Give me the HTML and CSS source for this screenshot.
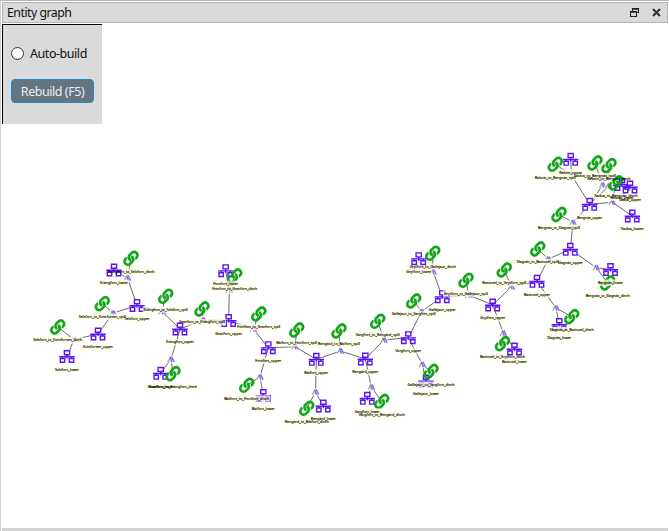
FILE: index.html
```html
<!DOCTYPE html>
<html lang="en">
<head>
<meta charset="utf-8">
<title>Entity graph</title>
<link rel="stylesheet" href="styles.css">
</head>
<body>
<section class="dock">
  <header class="dock-title">
    <span class="dock-name">Entity graph</span>
    <svg class="dock-icon" viewBox="0 0 9 9"><path d="M2.5 3V.5h6v4H7M2.5 1.3h6M.5 3.5h6v5h-6zM.5 4.3h6" fill="none" stroke="#222" stroke-width="1.1"/></svg>
    <svg class="dock-icon" viewBox="0 0 9 9"><path d="M1 1l7 7M8 1L1 8" fill="none" stroke="#333" stroke-width="2.1"/></svg>
  </header>
  <main class="canvas">
    <form class="options">
      <label class="auto"><input class="radio" type="radio">Auto-build</label>
      <button class="rebuild" type="button">Rebuild (F5)</button>
    </form>
    <svg class="graph" id="graph" viewBox="0 0 669 531">
      <defs>
        <g id="unit">
          <path d="M0-1.6V2M-7.7.2h15.4M-4.6.2v2M4.6.2v2" class="wire"/>
          <path d="M-2.6-5.8h5.2v4h-5.2zM-6.7 2h4.4v3.8h-4.4zM2.3 2h4.4v3.8H2.3z" class="box"/>
        </g>
        <g id="link"><path transform="scale(.0298) translate(-256 -256)" d="M326.612 185.391c59.747 59.809 58.927 155.698.36 214.59-.11.12-.24.25-.36.37l-67.2 67.2c-59.27 59.27-155.699 59.262-214.96 0-59.27-59.26-59.27-155.7 0-214.96l37.106-37.106c9.84-9.84 26.786-3.3 27.294 10.606.648 17.722 3.826 35.527 9.69 52.721 1.986 5.822.567 12.262-3.783 16.612l-13.087 13.087c-28.026 28.026-28.905 73.66-1.155 101.96 28.024 28.579 74.086 28.749 102.325.51l67.2-67.19c28.191-28.191 28.073-73.757 0-101.83-3.701-3.694-7.429-6.564-10.341-8.569a16.037 16.037 0 0 1-6.947-12.606c-.396-10.567 3.348-21.456 11.698-29.806l21.054-21.055c5.521-5.521 14.182-6.199 20.584-1.731a152.482 152.482 0 0 1 20.522 17.197zM467.547 44.449c-59.261-59.262-155.69-59.27-214.96 0l-67.2 67.2c-.12.12-.25.25-.36.37-58.566 58.892-59.387 154.781.36 214.59a152.454 152.454 0 0 0 20.521 17.196c6.402 4.468 15.064 3.789 20.584-1.731l21.054-21.055c8.35-8.35 12.094-19.239 11.698-29.806a16.037 16.037 0 0 0-6.947-12.606c-2.912-2.005-6.64-4.875-10.341-8.569-28.073-28.073-28.191-73.639 0-101.83l67.2-67.19c28.239-28.239 74.3-28.069 102.325.51 27.75 28.3 26.872 73.934-1.155 101.96l-13.087 13.087c-4.35 4.35-5.769 10.79-3.783 16.612 5.864 17.194 9.042 34.999 9.69 52.721.509 13.906 17.454 20.446 27.294 10.606l37.106-37.106c59.271-59.259 59.271-155.699.001-214.959z" class="chain"/></g>
        <g id="joint">
          <circle r="4.2" class="halo"/>
          <path d="M-3.2 2.8L-.9-1.6" class="joint-green"/>
          <path d="M-1-2.6L1 2.8M.6-2.6L3.2 2.8" class="joint-violet"/>
        </g>
      </defs>
    </svg>
  </main>
</section>
<script src="graph.js"></script>
</body>
</html>
```

FILE: styles.css
```css
* { box-sizing: border-box; }
body {
  margin: 0;
  height: 531px;
  background: #fff;
  font: 12.5px "Noto Sans", "Open Sans", sans-serif;
  letter-spacing: -0.45px;
  color: #111;
  overflow: hidden;
}
.dock {
  height: 531px;
  border-top: 1px solid #b8b8b8;
  border-left: 1px solid #d0d0d0;
  padding: 1px 1px 0 1px;
  display: flex;
  flex-direction: column;
}
.dock-title {
  height: 21px;
  flex: none;
  display: flex;
  align-items: center;
  padding: 0 6px 0 4px;
  gap: 13px;
  background: #dadada;
  border: 1px solid #b4b4b4;
}
.dock-name { flex: 1; font-size: 12.3px; letter-spacing: -0.5px; line-height: 18px; padding-top: 1px; }
.dock-icon { width: 9px; height: 9px; }
.canvas {
  flex: 1;
  display: grid;
  padding-top: 1px;
  border-bottom: 3px solid #d3d3d3;
}
.options {
  width: 100px;
  height: 100px;
  background: #dadada;
  border-top: 1px solid #000;
  border-left: 1px solid #000;
  padding: 18px 8px 0;
  display: flex;
  flex-direction: column;
  gap: 16px;
}
.auto { display: flex; align-items: center; gap: 6px; height: 20px; white-space: nowrap; }
.radio {
  appearance: none;
  width: 13px;
  height: 13px;
  margin: 0;
  border: 1px solid #333;
  border-radius: 50%;
  background: #fff;
}
.rebuild {
  height: 24px;
  width: 83px;
  padding: 0;
  border: 1px solid #1e8bd0;
  border-radius: 4px;
  background: #637582;
  color: #eee;
  font: inherit;
  letter-spacing: -0.45px;
  white-space: nowrap;
}
.graph { position: absolute; left: 0; top: 0; width: 669px; height: 531px; letter-spacing: 0; pointer-events: none; }
.edge { stroke: #444; stroke-width: .8; }
.wire, .box { fill: none; stroke: #5a14f5; stroke-width: 1.4; }
.box { fill: #fff; }
.chain { fill: #0ca614; stroke: #0ca614; stroke-width: 10; }
.halo { fill: #fff; opacity: .65; }
.joint-green { fill: none; stroke: #79c97d; stroke-width: 1.3; }
.joint-violet { fill: none; stroke: #9062ec; stroke-width: 1.4; }
.plate { fill: #ffffdc; fill-opacity: .72; }
.caption {
  font: 4px "Noto Sans", sans-serif;
  fill: #000;
  stroke: #000;
  stroke-width: .12;
  text-anchor: middle;
}
```

FILE: graph.js
```js
// Units: name, x, y, caption width, raised above the caption plates
const units = [
  ["Krångfors_lower", 114, 270, 28, true], ["Selsfors_upper", 137, 305.5, 25],
  ["Kvistforsen_upper", 98, 334, 30], ["Selsfors_lower", 67, 356.5, 24],
  ["Krångfors_upper", 180, 329, 28, true], ["Granfors_upper", 228.7, 320.5, 27],
  ["Finnfors_lower", 225.7, 270.7, 25], ["Granfors_lower", 160.7, 373.3, 26],
  ["Finnfors_upper", 268.3, 347.7, 26], ["Båtfors_upper", 316.3, 359.3, 24],
  ["Båtfors_lower", 263.3, 395.5, 23], ["Rengård_lower", 323.3, 406, 25],
  ["Rengård_upper", 365.3, 359, 26], ["Vargfors_upper", 408.3, 337.7, 26],
  ["Vargfors_lower", 367.3, 398.3, 25], ["Gallejaur_lower", 426, 381, 26],
  ["Gallejaur_upper", 442.3, 296.7, 27], ["Grytfors_lower", 418.7, 258.7, 25, true],
  ["Grytfors_upper", 492.7, 305, 25], ["Bastusel_upper", 537, 281.3, 26],
  ["Slagnäs_upper", 570.3, 249.3, 25], ["Slagnäs_lower", 559.3, 324.5, 24],
  ["Bastusel_lower", 514.5, 349, 25, true], ["Rebnis_upper", 570.7, 159.3, 23],
  ["Rebnis_lower", 622, 184.5, 23, true], ["Sadva_upper", 630, 187, 22, true],
  ["Sadva_lower", 632.3, 216, 23], ["Bergnäs_upper", 589.7, 204.3, 25],
  ["Bergnäs_lower", 610.5, 269.5, 25]
];
// Connections: name, x, y, caption width, joint x, joint y, upstream unit, downstream unit
const links = [
  ["Krångfors_to_Selsfors_disch", 131, 258.3, 47, 127.5, 278, 0, 1],
  ["Selsfors_to_Kvistforsen_spill", 102.3, 303.7, 47, 113, 313, 1, 2],
  ["Selsfors_to_Kvistforsen_disch", 57.7, 327, 49, 74, 339.5, 2, 3],
  ["Krångfors_to_Selsfors_spill", 165.7, 296.3, 44, 162, 311.5, 4, 1],
  ["Granfors_to_Krångfors_spill", 202, 309, 46, 203.3, 320, 5, 4],
  ["Finnfors_to_Granfors_disch", 234.7, 276, 45, 229.3, 290, 6, 5],
  ["Finnfors_to_Granfors_spill", 258.8, 314, 43, 253.3, 329, 8, 5],
  ["Granfors_to_Krångfors_disch", 173, 373.7, 48, 171, 359.3, 7, 4],
  ["Båtfors_to_Finnfors_spill", 296.7, 330, 41, 295, 346.7, 9, 8],
  ["Rengård_to_Båtfors_spill", 339, 331, 42, 340.5, 351, 12, 9],
  ["Båtfors_to_Finnfors_disch", 246.7, 385.3, 45, 260, 377, 10, 8],
  ["Rengård_to_Båtfors_disch", 306.7, 408.3, 44, 315.5, 392, 11, 9],
  ["Vargfors_to_Rengård_spill", 377.7, 321.3, 44, 384, 340, 13, 12],
  ["Vargfors_to_Rengård_disch", 381.7, 401.5, 46, 371.3, 387, 14, 12],
  ["Gallejaur_to_Vargfors_disch", 431, 371.5, 47, 422.3, 364.3, 15, 13],
  ["Gallejaur_to_Vargfors_spill", 413.7, 301, 44, 421.7, 311.5, 16, 13],
  ["Grytfors_to_Gallejaur_disch", 432.7, 253.3, 46, 433, 271.7, 17, 16],
  ["Grytfors_to_Gallejaur_spill", 466, 280.3, 44, 468.7, 295, 18, 16],
  ["Bastusel_to_Grytfors_spill", 504.3, 270, 44, 511.3, 286.7, 19, 18],
  ["Slagnäs_to_Bastusel_spill", 537.7, 249, 42, 548.3, 259, 20, 19],
  ["Slagnäs_to_Bastusel_disch", 571.7, 316.7, 44, 556, 308, 21, 19],
  ["Bastusel_to_Grytfors_disch", 502.5, 343.7, 45, 503.3, 333, 22, 18],
  ["Rebnis_to_Bergnäs_spill", 555.3, 164.3, 41, 571.5, 175, 23, 27],
  ["Sadva_to_Bergnäs_spill", 595, 163, 42, 602.7, 185, 25, 27],
  ["Rebnis_to_Bergnäs_disch", 609, 165.7, 43, 608.7, 186, 24, 27],
  ["Sadva_to_Bergnäs_disch", 616, 183, 43, 612.3, 202.3, 26, 27],
  ["Bergnäs_to_Slagnäs_spill", 559, 214.5, 42, 573, 222.3, 27, 20],
  ["Bergnäs_to_Slagnäs_disch", 607.7, 283, 44, 596.3, 267.7, 28, 20]
];

const graph = document.getElementById("graph");

function add(tag, attrs, text) {
  const el = document.createElementNS("http://www.w3.org/2000/svg", tag);
  for (const key in attrs) el.setAttribute(key, attrs[key]);
  if (text) el.textContent = text;
  graph.appendChild(el);
}
function edge(x1, y1, x2, y2) { add("line", { class: "edge", x1, y1, x2, y2 }); }
function place(id, x, y) { add("use", { href: "#" + id, x, y }); }
function plate(x, y, w) {
  add("rect", { class: "plate", x: x - w / 2 - 1, y: y - 3.2, width: w + 2, height: 6.4 });
}
function caption(name, x, y, w) {
  add("text", { class: "caption", x, y: y + 1.2, textLength: w, lengthAdjust: "spacingAndGlyphs" }, name);
}

for (const [, x, y, , jx, jy, a, b] of links) {
  edge(x, y, jx, jy);
  edge(jx, jy, units[a][1], units[a][2]);
  edge(jx, jy, units[b][1], units[b][2]);
}
for (const l of links) place("joint", l[4], l[5]);
for (const u of units) if (!u[4]) place("unit", u[1], u[2]);
for (const l of links) if (l[0] !== "Sadva_to_Bergnäs_disch") place("link", l[1], l[2]);
for (const [, x, y, w] of [...units, ...links]) plate(x, y + 13.2, w);
for (const u of units) if (u[4]) place("unit", u[1], u[2]);
for (const l of links) if (l[0] === "Sadva_to_Bergnäs_disch") place("link", l[1], l[2]);
for (const [name, x, y, w] of [...units, ...links]) caption(name, x, y + 13.2, w);
```
